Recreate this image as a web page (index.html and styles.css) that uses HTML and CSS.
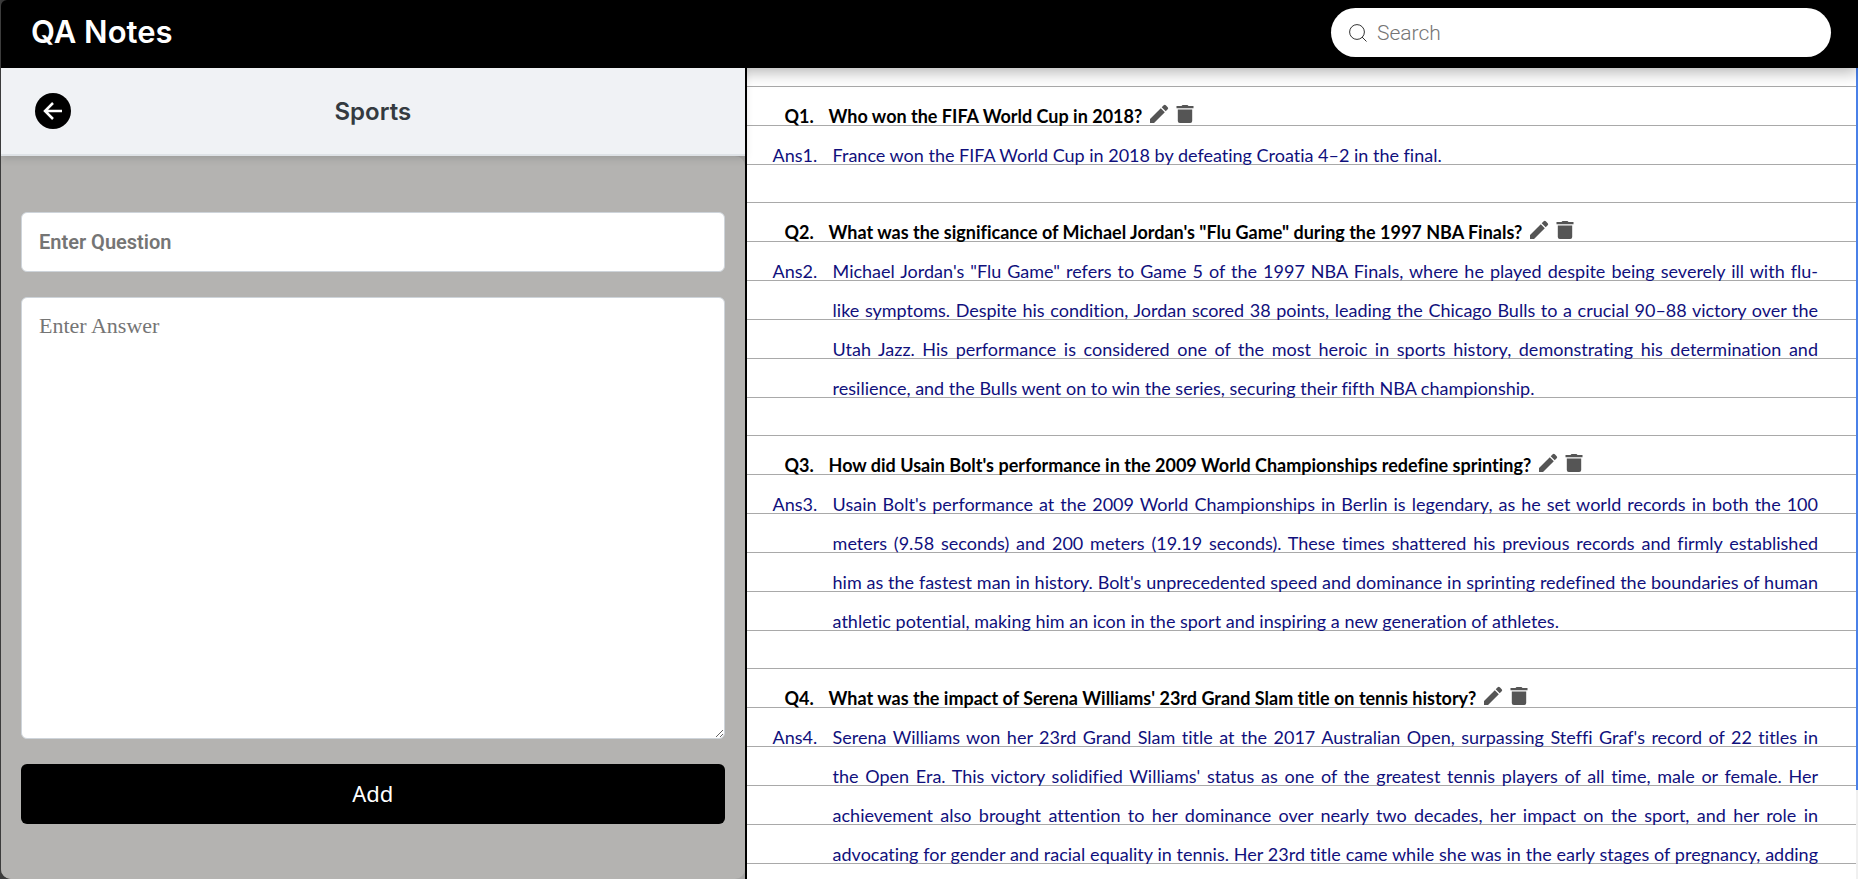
FILE: index.html
```html
<!DOCTYPE html>
<html lang="en">
<head>
<meta charset="utf-8">
<meta name="viewport" content="width=device-width, initial-scale=1">
<title>QA Notes</title>
<link rel="stylesheet" href="styles.css">
</head>
<body>
<svg class="sprite" aria-hidden="true">
  <symbol id="pencil" viewBox="0 0 24 24"><path d="M3 17V21h4L17.800 10.200l-4-4zM20.700 7.300a1.500 1.500 0 0 0 0-2.100l-1.900-1.900a1.500 1.500 0 0 0-2.100 0L14.700 5.300l4 4z"/></symbol>
  <symbol id="trash" viewBox="0 0 24 24"><path d="M4.800 7.500h14.400v11.500a2 2 0 0 1-2 2H6.800a2 2 0 0 1-2-2zM3.500 4h5L9.500 3h5l1 1h5v2.200h-17z"/></symbol>
</svg>
<header class="topbar">
  <h1 class="brand">QA Notes</h1>
  <label class="search">
    <svg class="search-icon" viewBox="0 0 18 18" aria-hidden="true"><circle cx="8" cy="8" r="7.400"/><path d="M13 13l4.500 4.500"/></svg>
    <input class="search-input" type="search" placeholder="Search" aria-label="Search">
  </label>
</header>
<div class="workspace">
  <section class="panel">
    <div class="panel-head">
      <button class="back" type="button" aria-label="Back"><svg viewBox="0 0 36 36" aria-hidden="true"><path d="M27 18H10M18 10l-8 8 8 8"/></svg></button>
      <h2 class="subject">Sports</h2>
    </div>
    <form class="form">
      <input class="field question-field" type="text" placeholder="Enter Question" aria-label="Question">
      <textarea class="field answer-field" placeholder="Enter Answer" aria-label="Answer"></textarea>
      <button class="add" type="button">Add</button>
    </form>
  </section>
  <main class="notes">
    <article class="entry">
      <h3 class="question"><span class="label">Q1.</span><span>Who won the FIFA World Cup in 2018?<button class="tool" type="button" aria-label="Edit"><svg><use href="#pencil"/></svg></button><button class="tool" type="button" aria-label="Delete"><svg><use href="#trash"/></svg></button></span></h3>
      <div class="answer"><span class="label">Ans1.</span><p class="text">France won the FIFA World Cup in 2018 by defeating Croatia 4–2 in the final.</p></div>
    </article>
    <article class="entry">
      <h3 class="question"><span class="label">Q2.</span><span>What was the significance of Michael Jordan's "Flu Game" during the 1997 NBA Finals?<button class="tool" type="button" aria-label="Edit"><svg><use href="#pencil"/></svg></button><button class="tool" type="button" aria-label="Delete"><svg><use href="#trash"/></svg></button></span></h3>
      <div class="answer"><span class="label">Ans2.</span><p class="text"><span class="row">Michael Jordan's "Flu Game" refers to Game 5 of the 1997 NBA Finals, where he played despite being severely ill with flu-</span><span class="row">like symptoms. Despite his condition, Jordan scored 38 points, leading the Chicago Bulls to a crucial 90–88 victory over the</span> <span class="row">Utah Jazz. His performance is considered one of the most heroic in sports history, demonstrating his determination and</span> resilience, and the Bulls went on to win the series, securing their fifth NBA championship.</p></div>
    </article>
    <article class="entry">
      <h3 class="question"><span class="label">Q3.</span><span>How did Usain Bolt's performance in the 2009 World Championships redefine sprinting?<button class="tool" type="button" aria-label="Edit"><svg><use href="#pencil"/></svg></button><button class="tool" type="button" aria-label="Delete"><svg><use href="#trash"/></svg></button></span></h3>
      <div class="answer"><span class="label">Ans3.</span><p class="text"><span class="row">Usain Bolt's performance at the 2009 World Championships in Berlin is legendary, as he set world records in both the 100</span> <span class="row">meters (9.58 seconds) and 200 meters (19.19 seconds). These times shattered his previous records and firmly established</span> <span class="row">him as the fastest man in history. Bolt's unprecedented speed and dominance in sprinting redefined the boundaries of human</span> athletic potential, making him an icon in the sport and inspiring a new generation of athletes.</p></div>
    </article>
    <article class="entry">
      <h3 class="question"><span class="label">Q4.</span><span>What was the impact of Serena Williams' 23rd Grand Slam title on tennis history?<button class="tool" type="button" aria-label="Edit"><svg><use href="#pencil"/></svg></button><button class="tool" type="button" aria-label="Delete"><svg><use href="#trash"/></svg></button></span></h3>
      <div class="answer"><span class="label">Ans4.</span><p class="text"><span class="row">Serena Williams won her 23rd Grand Slam title at the 2017 Australian Open, surpassing Steffi Graf's record of 22 titles in</span> <span class="row">the Open Era. This victory solidified Williams' status as one of the greatest tennis players of all time, male or female. Her</span> <span class="row">achievement also brought attention to her dominance over nearly two decades, her impact on the sport, and her role in</span> <span class="row">advocating for gender and racial equality in tennis. Her 23rd title came while she was in the early stages of pregnancy, adding</span></p></div>
    </article>
  </main>
  <div class="scroll-track" aria-hidden="true"><div class="scroll-thumb"></div></div>
</div>
</body>
</html>
```
FILE: styles.css
```css
* { box-sizing: border-box; }

body {
  display: flex;
  flex-direction: column;
  height: 100vh;
  margin: 0;
  overflow: hidden;
  border-left: 1px solid #3c3c3c;
  background: #3c3c3c;
  font-family: Roboto, "Liberation Sans", sans-serif;
}

h1, h2, h3, p { margin: 0; }
button, input, textarea { font: inherit; }
button { padding: 0; border: 0; cursor: pointer; }
.sprite { display: none; }

.topbar {
  z-index: 1;
  display: flex;
  flex: none;
  align-items: flex-start;
  justify-content: space-between;
  height: 68px;
  padding: 8px 27px 0 30px;
  border-top-left-radius: 6px;
  background: #000;
  box-shadow: 0 4px 16px rgba(0, 0, 0, 0.3);
}

.brand {
  color: #fff;
  font-family: Inter, sans-serif;
  font-size: 31px;
  font-weight: 600;
  line-height: 48px;
}

.search {
  display: flex;
  align-items: center;
  gap: 10px;
  width: 500px;
  max-width: 60%;
  height: 49px;
  padding: 0 18px;
  border-radius: 25px;
  background: #fff;
}

.search-icon {
  flex: none;
  width: 18px;
  height: 18px;
  fill: none;
  stroke: #333;
  stroke-width: 1;
}

.search-input {
  flex: 1;
  min-width: 0;
  padding: 0;
  border: 0;
  outline: 0;
  background: none;
  font-size: 21px;
  font-weight: 300;
}
.search-input::placeholder { color: #757575; }

.workspace {
  display: flex;
  flex: 1;
  min-height: 0;
}

.panel {
  z-index: 2;
  display: flex;
  flex: none;
  flex-direction: column;
  width: 40.15%;
  border-right: 2px solid #000;
  border-bottom-left-radius: 10px;
  background: #a5a4a3;
}

.panel-head {
  z-index: 1;
  display: grid;
  grid-template-columns: 36px 1fr 36px;
  align-items: center;
  height: 88px;
  padding: 0 34px;
  border-bottom: 2px solid #dee2e6;
  background: #f0f2f5;
  box-shadow: 0 2px 8px rgba(0, 0, 0, 0.15);
}

.back {
  width: 36px;
  height: 36px;
  border-radius: 50%;
  background: #000;
}
.back svg {
  display: block;
  fill: none;
  stroke: #fff;
  stroke-width: 2.5;
}

.subject {
  color: #343a40;
  font-family: Inter, sans-serif;
  font-size: 24px;
  font-weight: 600;
  text-align: center;
}

.form {
  display: flex;
  flex: 1;
  flex-direction: column;
  gap: 25px;
  padding: 56px 20px 55px;
  border-radius: 10px;
  border-top-left-radius: 0;
  background: #b4b3b1;
}

.field {
  padding: 0 17px;
  border: 1px solid #ced4da;
  border-radius: 6px;
  background: #fff;
}
.field::placeholder { color: #757575; }

.question-field {
  height: 60px;
  font-size: 20px;
  font-weight: 600;
}

.answer-field {
  flex: 1;
  padding-top: 14px;
  font-family: "Liberation Serif", serif;
  font-size: 22px;
  line-height: 28px;
}

.add {
  height: 60px;
  padding-bottom: 2px;
  border-radius: 6px;
  background: #000;
  color: #fff;
  font-family: "Noto Sans", sans-serif;
  font-size: 22px;
  line-height: 28px;
}

.notes {
  flex: 1;
  min-width: 0;
  padding-top: 18px;
  overflow: auto;
  scrollbar-width: none;
  background: #fff;
  font-family: Lato, sans-serif;
  font-size: 18px;
  font-variant-ligatures: none;
  line-height: 39px;
}

/* Each entry draws its own ruled lines, starting at its top edge. */
.entry {
  padding: 11px 38px 27px 26px;
  background: linear-gradient(#a9a9a9 1px, transparent 1px) 0 0 / 100% 39px;
}
.entry:last-child { padding-bottom: 0; }

.question, .answer { display: flex; }

.question {
  padding-left: 12px;
  color: #000;
  font-size: 18px;
  font-weight: 700;
}

.label {
  flex: none;
  width: 60px;
}
.question .label { width: 44px; }

.answer { color: #10107c; }

.text {
  flex: 1;
  text-align: justify;
}

.row {
  display: block;
  text-align-last: justify;
}

.tool {
  width: 24px;
  height: 24px;
  margin-left: 5px;
  background: none;
  vertical-align: -3px;
}
.tool + .tool { margin-left: 2px; }
.tool svg {
  display: block;
  width: 24px;
  height: 24px;
  fill: #555;
}

.scroll-track {
  flex: none;
  width: 2px;
  background: #f0f0f0;
}

.scroll-thumb {
  height: 89%;
  background: #4a80e8;
}
```
